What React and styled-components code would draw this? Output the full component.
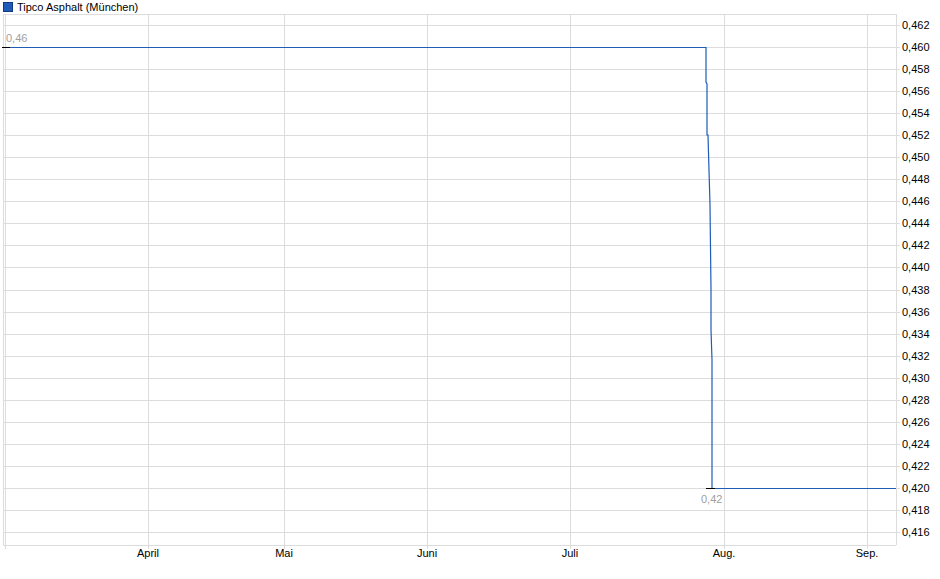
import React from 'react';
import styled, { createGlobalStyle } from 'styled-components';

const Global = createGlobalStyle`
  html, body { margin: 0; padding: 0; background: #fff; }
  body { font-family: "Liberation Sans", Arial, sans-serif; }
`;

const Wrap = styled.div`
  width: 940px;
  height: 579px;
  position: relative;
  background: #fff;
`;

const Legend = styled.div`
  display: flex;
  align-items: center;
  gap: 4px;
  padding: 1px 0 0 3px;
  height: 12px;
  font-size: 11px;
  color: #000;
`;

const Swatch = styled.span`
  width: 8px;
  height: 8px;
  background: #1f5bb8;
  border: 1px solid #123a80;
`;

const Chart = styled.svg`
  position: absolute;
  left: 0;
  top: 0;
  font-family: "Liberation Sans", Arial, sans-serif;
`;

const L = 3, R = 896, T = 14, B = 545;
const yOf = v => 488 - (v - 0.42) / 0.002 * 22.05;
const ticks = Array.from({ length: 24 }, (_, i) => 0.416 + i * 0.002);
const months = [
  { x: 148, label: 'April' },
  { x: 284, label: 'Mai' },
  { x: 427, label: 'Juni' },
  { x: 570, label: 'Juli' },
  { x: 724, label: 'Aug.' },
  { x: 867, label: 'Sep.' },
];

export default function App() {
  return (
    <Wrap>
      <Global />
      <Legend><Swatch />Tipco Asphalt (München)</Legend>
      <Chart width="940" height="579">
        {ticks.map(v => (
          <g key={v}>
            <line x1={L} x2={R + 4} y1={Math.round(yOf(v)) + 0.5} y2={Math.round(yOf(v)) + 0.5} stroke="#dcdcdc" />
            <text x={902} y={Math.round(yOf(v)) + 4} fontSize="11" fill="#000">{v.toFixed(3).replace('.', ',')}</text>
          </g>
        ))}
        {months.map(m => (
          <g key={m.label}>
            <line x1={m.x + 0.5} x2={m.x + 0.5} y1={T} y2={B + 4} stroke="#dcdcdc" />
            <text x={m.x} y={557} fontSize="11" textAnchor="middle" fill="#000">{m.label}</text>
          </g>
        ))}
        <line x1={L + 0.5} x2={L + 0.5} y1={T} y2={B} stroke="#dcdcdc" />
        <line x1={5.5} x2={5.5} y1={T} y2={B + 4} stroke="#dcdcdc" />
        <line x1={R + 0.5} x2={R + 0.5} y1={T} y2={B} stroke="#dcdcdc" />
        <line x1={L} x2={R} y1={T + 0.5} y2={T + 0.5} stroke="#dcdcdc" />
        <line x1={L} x2={R} y1={B + 0.5} y2={B + 0.5} stroke="#dcdcdc" />
        <polyline
          points={`3,47.5 706,47.5 706,82 707,84 707,135 708,135 710,205 711,290 711,330 712,360 712,488.5 896,488.5`}
          fill="none"
          stroke="#1f5bb8"
          strokeWidth="1.2"
        />
        <line x1={2} x2={10} y1={47.5} y2={47.5} stroke="#000" />
        <line x1={706} x2={715} y1={488.5} y2={488.5} stroke="#000" />
        <text x={6} y={42} fontSize="11" fill="#a0a0a0">0,46</text>
        <text x={701} y={503} fontSize="11" fill="#a0a0a0">0,42</text>
      </Chart>
    </Wrap>
  );
}
